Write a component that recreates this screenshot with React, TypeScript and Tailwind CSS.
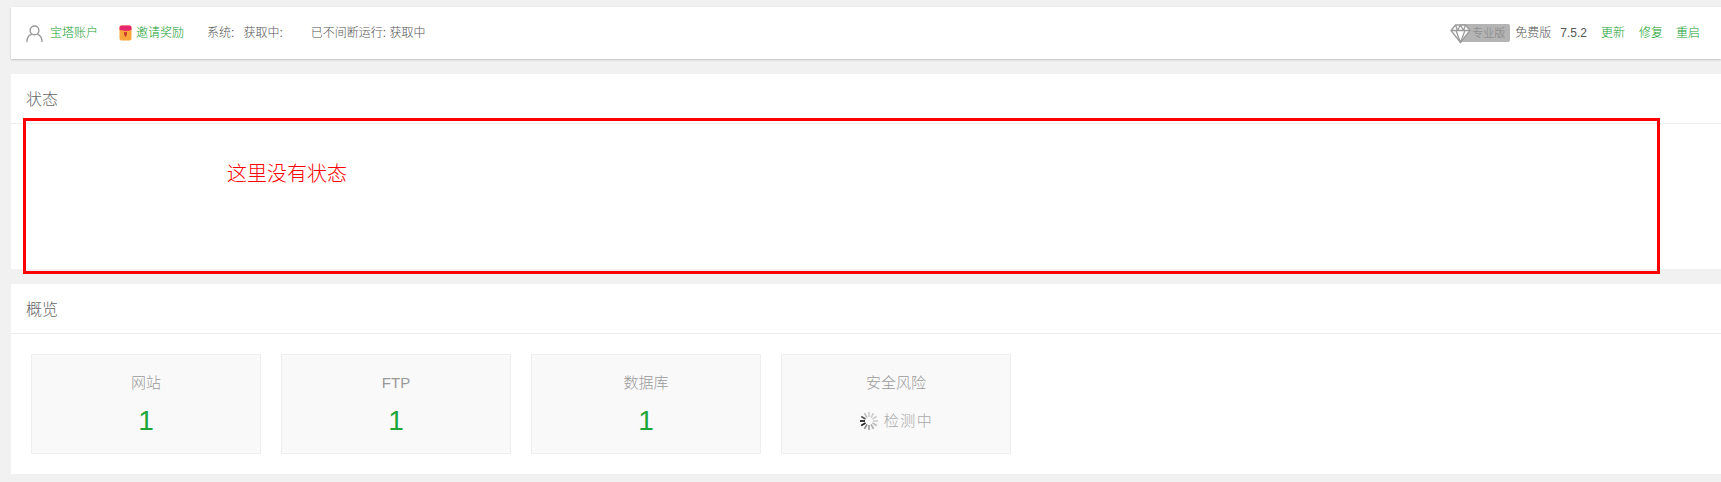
import React from 'react';

const font = "font-['Liberation_Sans','Noto_Sans_CJK_SC',sans-serif]";

function UserIcon() {
  return (
    <svg width="17" height="17" viewBox="0 0 17 17" fill="none" stroke="#999" strokeWidth="1.4" className="shrink-0">
      <circle cx="8.5" cy="5.4" r="4.4" />
      <path d="M1 16.5c0-4 2.6-6.6 4.6-7.4M16 16.5c0-4-2.6-6.6-4.6-7.4" strokeLinecap="round" />
    </svg>
  );
}

function GiftIcon() {
  return (
    <svg width="13" height="16" viewBox="0 0 13 16" className="shrink-0">
      <rect x="0.5" y="0.5" width="12" height="15" rx="2" fill="#f9a63a" />
      <path d="M0.5 2.5a2 2 0 0 1 2-2h8a2 2 0 0 1 2 2v2.2c-3 1.6-9 1.6-12 0z" fill="#e8266e" />
      <path d="M5 7h3v2.4l-1 2.4h-1l-1-2.4z" fill="#d0402a" />
    </svg>
  );
}

function DiamondIcon() {
  return (
    <svg width="21" height="21" viewBox="0 0 21 21" fill="none" stroke="#9a9a9a" strokeWidth="1.3" strokeLinejoin="round" className="absolute left-[-11px] top-[-1px]">
      <path d="M5.5 2h10l4.5 5.5L10.5 19.5 1 7.5z" fill="#fff" />
      <path d="M1 7.5h19M6 7.5l4.5 12 4.5-12M5.5 2L7.5 7.5 10.5 2l3 5.5 2-5.5" />
    </svg>
  );
}

function Spinner() {
  const bars = [0, 30, 60, 90, 120, 150, 180, 210, 240, 270, 300, 330];
  const colors = ['#ccc', '#ccc', '#ccc', '#ccc', '#bbb', '#aaa', '#999', '#888', '#222', '#111', '#555', '#bbb'];
  return (
    <svg width="20" height="20" viewBox="0 0 20 20" className="shrink-0">
      {bars.map((deg, i) => (
        <rect key={deg} x="9.2" y="1" width="1.6" height="5" fill={colors[i]} transform={`rotate(${deg} 10 10)`} />
      ))}
    </svg>
  );
}

function Panel({ title, className, children }: { title: string; className: string; children?: React.ReactNode }) {
  return (
    <section className={`bg-white ml-[11px] ${className}`}>
      <div className="h-[50px] border-b border-[#eeeeee] pl-[15px] pt-[2px] flex items-center text-base font-light text-[#666666]">{title}</div>
      {children}
    </section>
  );
}

function StatCard({ title, children }: { title: string; children: React.ReactNode }) {
  return (
    <div className="w-[230px] h-[100px] bg-[#f9f9f9] border border-[#eeeeee] flex flex-col items-center pt-[18px]">
      <div className="text-[15px] font-light leading-5 text-[#999999]">{title}</div>
      <div className="h-[38px] mt-[9px] flex items-center justify-center">{children}</div>
    </div>
  );
}

export default function App() {
  return (
    <div className={`${font} relative w-[1721px] h-[482px] overflow-hidden bg-[#f1f1f1] pt-[7px]`}>
      <header className="ml-[11px] h-[52px] bg-white shadow-[0_1px_2px_rgba(0,0,0,0.2)] flex items-center pl-[15px] pr-[21px] text-xs font-light text-[#555555]">
        <UserIcon />
        <a className="ml-[7px] text-[#12a02e]">宝塔账户</a>
        <span className="ml-[21px]"><GiftIcon /></span>
        <a className="ml-[4px] text-[#12a02e]">邀请奖励</a>
        <span className="ml-[23px]">系统:</span>
        <span className="ml-[9px]">获取中:</span>
        <span className="ml-[28px]">已不间断运行: 获取中</span>
        <div className="ml-auto flex items-center">
          <span className="relative h-[18px] w-[49px] rounded-[2px] bg-[#b4b4b4] text-[11px] text-[#808080] flex items-center justify-end pr-[5px]">
            <DiamondIcon />
            专业版
          </span>
          <span className="ml-[5px]">免费版</span>
          <span className="ml-[9px] text-[#555555]">7.5.2</span>
          <a className="ml-[14px] text-[#12a02e]">更新</a>
          <a className="ml-[14px] text-[#12a02e]">修复</a>
          <a className="ml-[13px] text-[#12a02e]">重启</a>
        </div>
      </header>

      <Panel title="状态" className="mt-[15px] h-[195px]" />

      <Panel title="概览" className="mt-[15px] h-[190px]">
        <div className="flex gap-5 pl-[20px] pt-[20px]">
          <StatCard title="网站"><span className="text-[28px] text-[#20a53a]">1</span></StatCard>
          <StatCard title="FTP"><span className="text-[28px] text-[#20a53a]">1</span></StatCard>
          <StatCard title="数据库"><span className="text-[28px] text-[#20a53a]">1</span></StatCard>
          <StatCard title="安全风险">
            <span className="flex items-center gap-[5px] font-light text-[#aaaaaa] text-[15px] tracking-[1.5px]">
              <Spinner />
              检测中
            </span>
          </StatCard>
        </div>
      </Panel>

      <div className="absolute left-[23px] top-[118px] w-[1637px] h-[156px] border-[3px] border-[#ff0000]">
        <span className="absolute left-[201px] top-[41px] text-xl font-light leading-6 text-[#ff0000]">这里没有状态</span>
      </div>
    </div>
  );
}
